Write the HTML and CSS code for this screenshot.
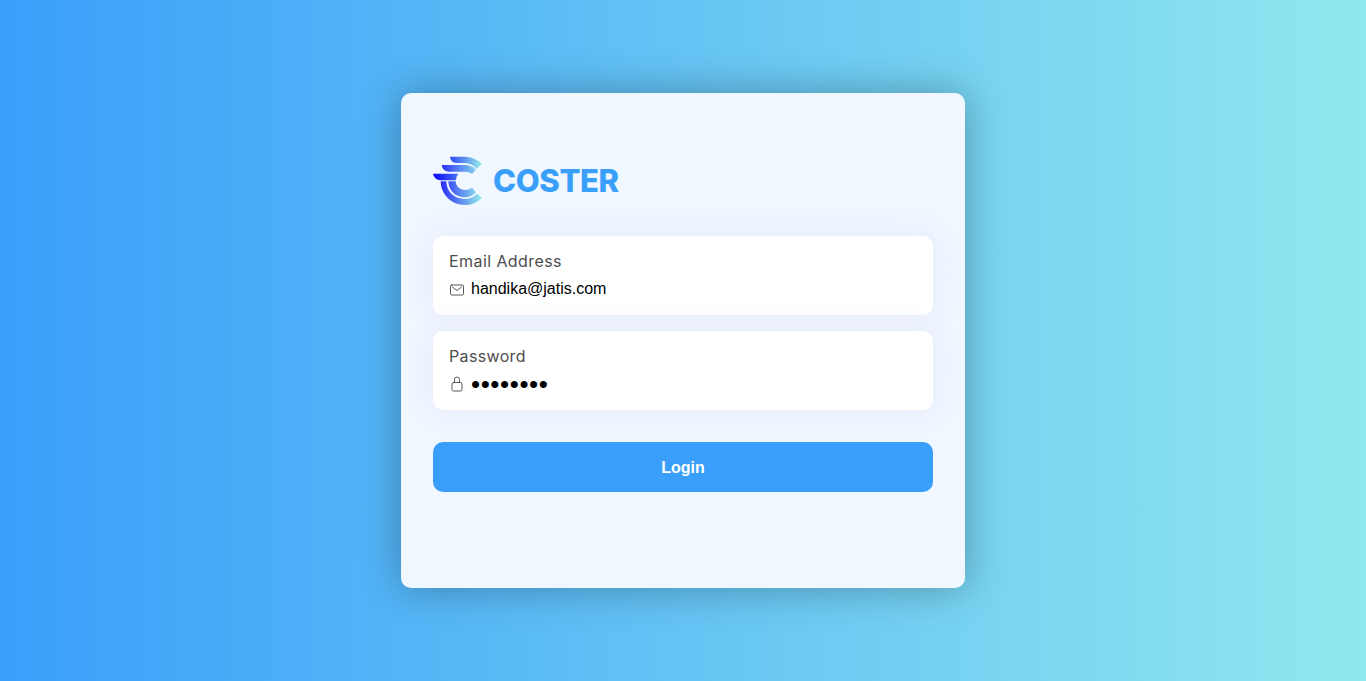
FILE: index.html
```html
<!DOCTYPE html>
<html lang="en">
<head>
<meta charset="utf-8">
<title>Coster Login</title>
<link rel="stylesheet" href="styles.css">
</head>
<body>
<main class="screen">
  <form class="card">
    <div class="brand">
      <svg class="logo" viewBox="24 24 150 150" aria-hidden="true">
        <defs>
          <linearGradient id="g1" gradientUnits="userSpaceOnUse" x1="75" y1="0" x2="171" y2="0"><stop offset="0" stop-color="#3048f6"/><stop offset="1" stop-color="#96f0ea"/></linearGradient>
          <linearGradient id="g2" gradientUnits="userSpaceOnUse" x1="50" y1="0" x2="171" y2="0"><stop offset="0" stop-color="#2c30f8"/><stop offset="1" stop-color="#96f0ea"/></linearGradient>
          <linearGradient id="g3" gradientUnits="userSpaceOnUse" x1="24" y1="0" x2="140" y2="0"><stop offset="0" stop-color="#0804fb"/><stop offset="1" stop-color="#6aaef2"/></linearGradient>
        </defs>
        <path fill="url(#g1)" d="M75 26H120Q150 27 171 47L155 62Q141 46 120 45H93Q77 43 75 26Z"/>
        <path fill="url(#g2)" d="M50 51H120Q139 51 153 65L141 78Q132 71 120 71H70Q53 69 50 51Z"/>
        <path fill="url(#g3)" d="M24 77H100Q93 86 93 97H47Q27 94 24 77Z"/>
        <path fill="url(#g2)" d="M47 100H64C65 133 89 153 120 153Q142 152 156 137L171 149Q151 171 120 171C80 171 48 141 47 100Z"/>
        <path fill="url(#g2)" d="M70 100H92C93 116 104 126 120 126Q132 126 141 119L153 133Q139 148 120 148C91 148 71 128 70 100Z"/>
      </svg>
      <h1 class="brand-name">COSTER</h1>
    </div>
    <div class="field">
      <label class="label label-email" for="email">Email Address</label>
      <div class="row">
        <svg class="icon" viewBox="0 0 512 512"><rect x="48" y="96" width="416" height="320" rx="40"/><path d="M112 160l144 112 144-112"/></svg>
        <input class="input" id="email" type="email" value="handika@jatis.com">
      </div>
    </div>
    <div class="field">
      <label class="label label-password" for="password">Password</label>
      <div class="row row-password">
        <svg class="icon" viewBox="0 0 512 512"><path d="M336 208v-95a80 80 0 00-160 0v95"/><rect x="96" y="208" width="320" height="272" rx="48"/></svg>
        <input class="input input-password" id="password" type="password" value="password">
      </div>
    </div>
    <button class="submit" type="button">Login</button>
  </form>
</main>
</body>
</html>
```
FILE: styles.css
```css
* { box-sizing: border-box; }
body { margin: 0; font-family: Inter, sans-serif; }
.screen {
  height: 681px;
  display: flex;
  align-items: center;
  justify-content: center;
  background: linear-gradient(to right, #3a9ffa, #90e8ee);
}
.card {
  width: 564px;
  height: 495px;
  padding: 63px 32px 0;
  display: flex;
  flex-direction: column;
  border-radius: 10px;
  background: #f0f7ff;
  box-shadow: 0 0 40px rgba(0, 0, 0, .3);
}
.brand { display: flex; align-items: center; height: 50px; margin-bottom: 30px; }
.logo { width: 50px; height: 50px; margin-right: 10px; }
.brand-name {
  margin: 0;
  color: #3a9ffa;
  font-size: 31px;
  line-height: 50px;
  font-weight: 800;
  letter-spacing: -.35px;
}
.field {
  height: 79px;
  margin-bottom: 16px;
  padding: 13px 16px 0;
  border-radius: 10px;
  background: #fff;
  box-shadow: 0 0 32px hsl(231, 62%, 94%);
}
.label { display: block; font-size: 16px; line-height: 24px; color: #4d4d4d; }
.label-email { letter-spacing: .42px; }
.label-password { letter-spacing: .35px; }
.row { display: flex; align-items: center; margin-top: 5px; height: 22px; }
.row-password { margin-top: 4px; }
.icon {
  width: 16px;
  height: 16px;
  margin-top: 2px;
  flex: none;
  fill: none;
  stroke: #4d4d4d;
  stroke-width: 30;
  stroke-linecap: round;
  stroke-linejoin: round;
}
.input {
  flex: 1;
  min-width: 0;
  border: 0;
  padding: 0;
  margin-left: 6px;
  outline: 0;
  background: none;
  color: #000;
  font: 16px "Liberation Sans", Arial, sans-serif;
}
.input-password {
  height: 32px;
  padding-top: 3px;
  font-size: 26px;
  letter-spacing: .58px;
}
.submit {
  height: 50px;
  margin-top: 16px;
  padding-top: 3px;
  border: 0;
  border-radius: 10px;
  background: #3a9ffa;
  color: #fff;
  font: bold 16px "Liberation Sans", Arial, sans-serif;
}
```
